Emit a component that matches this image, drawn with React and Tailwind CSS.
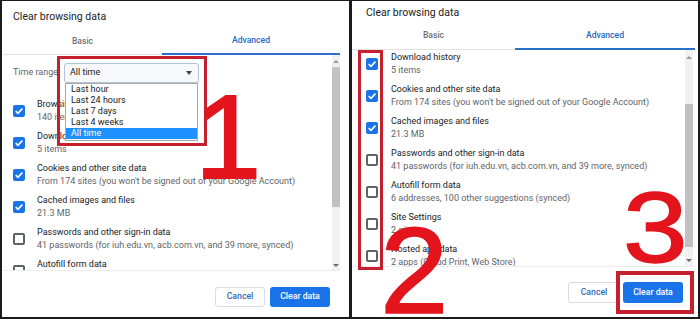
import React from 'react'

const Check = ({ checked }) => {
  if (checked) {
    return (
      <div className="w-[12px] h-[12px] rounded-[2px] bg-[#1a73e8] flex items-center justify-center shrink-0">
        <svg width="10" height="10" viewBox="0 0 10 10">
          <path d="M1.7 5.1 L4 7.3 L8.4 2.7" fill="none" stroke="white" strokeWidth="1.7" />
        </svg>
      </div>
    )
  }
  return <div className="w-[12px] h-[12px] rounded-[2px] border-2 border-[#5f6368] shrink-0" />
}

const Row = ({ checked, title, sub, textGap }) => (
  <div className="h-[32px] flex items-center shrink-0">
    <Check checked={checked} />
    <div className={`${textGap} flex flex-col whitespace-nowrap`}>
      <span className="text-[9px] leading-[13px] text-[#202124]">{title}</span>
      <span className="text-[9px] leading-[13px] text-[#5f6368]">{sub}</span>
    </div>
  </div>
)

const UpArrow = () => (
  <div className="w-0 h-0 border-l-[3px] border-r-[3px] border-b-[3px] border-l-transparent border-r-transparent border-b-[#9a9a9a]" />
)

const DownArrow = () => (
  <div className="w-0 h-0 border-l-[3px] border-r-[3px] border-t-[3px] border-l-transparent border-r-transparent border-t-[#6b6b6b]" />
)

const Tabs = ({ basicW, h }) => (
  <div className={`flex ${h} border-b border-[#e3e3e3] shrink-0`}>
    <div className={`${basicW} flex items-center justify-center text-[8.6px] font-medium text-[#6b6f73]`}>Basic</div>
    <div className="flex-1 flex items-center justify-center text-[8.6px] font-medium text-[#2a66bd] border-b-2 border-[#2a6fc9] -mb-px">
      Advanced
    </div>
  </div>
)

const Buttons = ({ cancelW, gap, h }) => (
  <div className={`flex justify-end ${gap}`}>
    <button className={`${cancelW} ${h} rounded-[3px] border border-[#dadce0] bg-white text-[8.7px] font-medium text-[#3367b8]`}>
      Cancel
    </button>
    <button className={`w-[60px] ${h} rounded-[3px] bg-[#1a73e8] text-[8.7px] font-medium text-white`}>
      Clear data
    </button>
  </div>
)

const LeftPanel = () => (
  <div className="w-[347px] bg-white flex flex-col">
    <div className="pt-[9px] pl-[11px] h-[23px] text-[10.5px] leading-[14px] text-[#202124] shrink-0">
      Clear browsing data
    </div>
    <div className="flex-1 flex flex-col pl-[1px] pr-[9px] mt-[4px]">
      <Tabs basicW="w-[159px]" h="h-[27px]" />
      <div className="h-[215px] flex shrink-0">
        <div className="flex-1 overflow-hidden pl-[10px]">
          <div className="h-[20px] mt-[8px] flex items-center">
            <span className="w-[51px] text-[9px] text-[#5f6368] whitespace-nowrap">Time range</span>
            <div className="w-[135px] h-[20px] rounded-[3px] border border-[#b4c3d8] bg-[#f7f8fa] flex items-center justify-between pl-[5px] pr-[6px]">
              <span className="text-[9px] text-[#202124]">All time</span>
              <div className="w-0 h-0 border-l-[3.5px] border-r-[3.5px] border-t-[4px] border-l-transparent border-r-transparent border-t-[#444]" />
            </div>
          </div>
          <div className="mt-[12px] flex flex-col">
            <Row checked title="Browsing history" sub="140 items" textGap="ml-[12px]" />
            <Row checked title="Download history" sub="5 items" textGap="ml-[12px]" />
            <Row checked title="Cookies and other site data" sub="From 174 sites (you won't be signed out of your Google Account)" textGap="ml-[12px]" />
            <Row checked title="Cached images and files" sub="21.3 MB" textGap="ml-[12px]" />
            <Row title="Passwords and other sign-in data" sub="41 passwords (for iuh.edu.vn, acb.com.vn, and 39 more, synced)" textGap="ml-[12px]" />
            <Row title="Autofill form data" sub="6 addresses, 100 other suggestions (synced)" textGap="ml-[12px]" />
          </div>
        </div>
        <div className="w-[8px] h-full bg-[#f1f1f1] flex flex-col items-center">
          <div className="h-[12px] flex items-center"><UpArrow /></div>
          <div className="w-full h-[140px] bg-[#c1c1c1]" />
          <div className="flex-1" />
          <div className="h-[10px] flex items-center"><DownArrow /></div>
        </div>
      </div>
      <div className="flex-1 border-t border-[#ececec] pt-[16px] pr-[10px]">
        <Buttons cancelW="w-[50px]" gap="gap-[5px]" h="h-[20px]" />
      </div>
    </div>
  </div>
)

const RightPanel = () => (
  <div className="w-[346px] bg-white flex flex-col">
    <div className="pt-[5px] pl-[14px] h-[19px] text-[10.5px] leading-[14px] text-[#202124] shrink-0">
      Clear browsing data
    </div>
    <div className="flex-1 flex flex-col pr-[3px] mt-[2px]">
      <Tabs basicW="w-[163px]" h="h-[28px]" />
      <div className="h-[216px] flex shrink-0">
        <div className="flex-1 overflow-hidden pl-[14px]">
          <div className="-mt-[2px] flex flex-col">
            <Row checked title="Download history" sub="5 items" textGap="ml-[13px]" />
            <Row checked title="Cookies and other site data" sub="From 174 sites (you won't be signed out of your Google Account)" textGap="ml-[13px]" />
            <Row checked title="Cached images and files" sub="21.3 MB" textGap="ml-[13px]" />
            <Row title="Passwords and other sign-in data" sub="41 passwords (for iuh.edu.vn, acb.com.vn, and 39 more, synced)" textGap="ml-[13px]" />
            <Row title="Autofill form data" sub="6 addresses, 100 other suggestions (synced)" textGap="ml-[13px]" />
            <Row title="Site Settings" sub="2 sites" textGap="ml-[13px]" />
            <Row title="Hosted app data" sub="2 apps (Cloud Print, Web Store)" textGap="ml-[13px]" />
          </div>
        </div>
        <div className="w-[8px] mr-[2px] h-full bg-[#f1f1f1] flex flex-col items-center">
          <div className="h-[14px] flex items-center"><UpArrow /></div>
          <div className="w-full h-[143px] mt-[40px] bg-[#c1c1c1]" />
          <div className="flex-1" />
          <div className="h-[12px] flex items-center"><DownArrow /></div>
        </div>
      </div>
      <div className="flex-1 border-t border-[#ececec] pt-[15px] pr-[12px]">
        <Buttons cancelW="w-[52px]" gap="gap-[3px]" h="h-[21px]" />
      </div>
    </div>
  </div>
)

export default function App() {
  return (
    <div className="relative w-[700px] h-[319px] bg-[#1b1b1b] flex gap-[3px] px-[2px] pt-[1px] pb-[2px] overflow-hidden font-[Roboto,'Liberation_Sans',sans-serif]">
      <LeftPanel />
      <RightPanel />

      {/* time range dropdown list */}
      <div className="absolute left-[65px] top-[83px] w-[133px] h-[58px] border border-[#a8a8a8] bg-white flex flex-col">
        <div className="h-[11px] pl-[5px] text-[9px] leading-[11px] text-[#202124]">Last hour</div>
        <div className="h-[11px] pl-[5px] text-[9px] leading-[11px] text-[#202124]">Last 24 hours</div>
        <div className="h-[11px] pl-[5px] text-[9px] leading-[11px] text-[#202124]">Last 7 days</div>
        <div className="h-[11px] pl-[5px] text-[9px] leading-[11px] text-[#202124]">Last 4 weeks</div>
        <div className="h-[11px] pl-[5px] text-[9px] leading-[11px] text-white bg-[#1e90ff]">All time</div>
      </div>

      {/* red highlight frames */}
      <div className="absolute left-[57px] top-[56px] w-[150px] h-[90px] border-[3px] border-[#c5202e]" />
      <div className="absolute left-[358px] top-[50px] w-[25px] h-[220px] border-[3px] border-[#c5202e]" />
      <div className="absolute left-[616px] top-[271px] w-[78px] h-[43px] border-[4px] border-[#c5202e]" />

      {/* step numbers */}
      <div className="absolute left-[195px] top-[77px] text-[119px] leading-none text-[#e3141c] [-webkit-text-stroke:2px_#e3141c] font-['Liberation_Sans',sans-serif]">1</div>
      <div className="absolute left-[380px] top-[209px] text-[123px] leading-none text-[#e3141c] [-webkit-text-stroke:1.5px_#e3141c] font-['Liberation_Sans',sans-serif]">2</div>
      <div className="absolute left-[623px] top-[177px] text-[101px] leading-none text-[#e3141c] [-webkit-text-stroke:1.5px_#e3141c] font-['Liberation_Sans',sans-serif] scale-x-[1.15] origin-left">3</div>
    </div>
  )
}
